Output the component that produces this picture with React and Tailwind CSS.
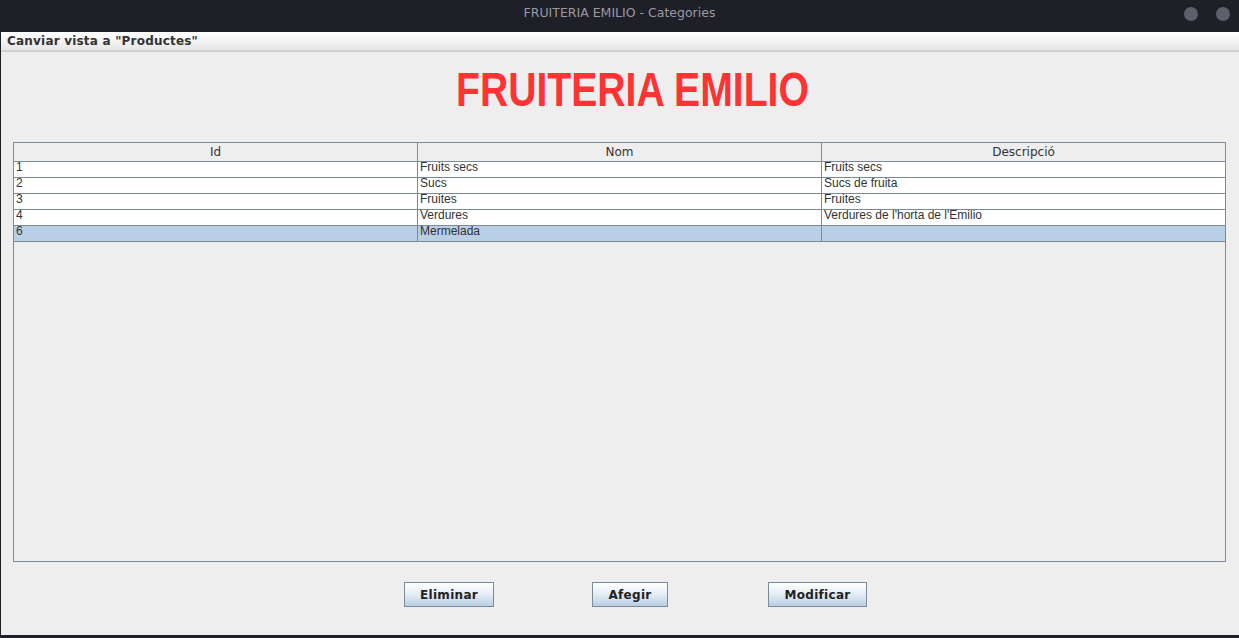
import React from "react";

const rows = [
    { id: "1", nom: "Fruits secs", desc: "Fruits secs" },
    { id: "2", nom: "Sucs", desc: "Sucs de fruita" },
    { id: "3", nom: "Fruites", desc: "Fruites" },
    { id: "4", nom: "Verdures", desc: "Verdures de l'horta de l'Emilio" },
    { id: "6", nom: "Mermelada", desc: "", selected: true },
];

const Button = ({ label, className }) => (
    <button
        className={`${className} h-[25px] shrink-0 border border-[#7a8a99] bg-gradient-to-b from-[#ffffff] via-[#e3ecf5] to-[#b9cfe4] text-[12px] font-bold text-[#222] font-['DejaVu_Sans',sans-serif] tracking-[0.3px]`}
    >
        {label}
    </button>
);

const Cell = ({ children, last }) => (
    <div className={`flex-1 h-[16px] overflow-hidden border-b border-[#7a8a99] ${last ? "" : "border-r"} pl-[2px]`}>
        <div className="text-[12px] leading-[13px] -mt-[1px] text-[#333] font-['Liberation_Sans',Arial,sans-serif]">
            {children}
        </div>
    </div>
);

export default function App() {
    return (
        <div className="w-[1239px] h-[638px] bg-[#1f1f28] flex flex-col overflow-hidden">
            {/* window title bar */}
            <div className="h-[32px] flex items-center relative shrink-0">
                <div className="flex-1 text-center text-[12.5px] text-[#9a9aa3] font-['DejaVu_Sans',sans-serif] -mt-[6px]">
                    FRUITERIA EMILIO - Categories
                </div>
                <div className="absolute right-[9px] top-[7px] flex gap-[18px]">
                    <span className="w-[14px] h-[14px] rounded-full bg-[#5f5f6b]" />
                    <span className="w-[14px] h-[14px] rounded-full bg-[#5f5f6b]" />
                </div>
            </div>

            <div className="flex-1 ml-[1px] mb-[3px] bg-[#eeeeee] flex flex-col">
                {/* menu bar */}
                <div className="h-[20px] shrink-0 bg-gradient-to-b from-[#ffffff] to-[#e6e6e6] border-b-2 border-[#d2d2d2] flex items-center pl-[6px]">
                    <span className="text-[12px] font-bold text-[#333] font-['DejaVu_Sans',sans-serif] tracking-[0.2px]">
                        Canviar vista a "Productes"
                    </span>
                </div>

                {/* heading */}
                <div className="h-[69px] flex items-center justify-center pt-[6px] pl-[24px]">
                    <h1 className="inline-block scale-x-[0.815] text-[48px] leading-none font-bold text-[#ff3333] font-['Liberation_Sans',Arial,sans-serif]">
                        FRUITERIA EMILIO
                    </h1>
                </div>

                {/* table */}
                <div className="mt-[21px] ml-[12px] mr-[13px] h-[420px] border border-[#7a8a99] flex flex-col bg-[#eeeeee]">
                    <div className="flex h-[19px] border-b border-[#7a8a99] bg-[#eeeeee]">
                        {["Id", "Nom", "Descripció"].map((h, i) => (
                            <div
                                key={h}
                                className={`flex-1 flex items-center justify-center text-[12px] text-[#333] font-['DejaVu_Sans',sans-serif] ${i < 2 ? "border-r border-[#7a8a99]" : ""}`}
                            >
                                {h}
                            </div>
                        ))}
                    </div>
                    {rows.map(r => (
                        <div key={r.id} className={`flex ${r.selected ? "bg-[#b8cfe5]" : "bg-white"}`}>
                            <Cell>{r.id}</Cell>
                            <Cell>{r.nom}</Cell>
                            <Cell last>{r.desc}</Cell>
                        </div>
                    ))}
                </div>

                {/* buttons */}
                <div className="flex items-start mt-[20px] ml-[403px]">
                    <Button label="Eliminar" className="w-[90px]" />
                    <Button label="Afegir" className="w-[76px] ml-[98px]" />
                    <Button label="Modificar" className="w-[99px] ml-[100px]" />
                </div>
            </div>
        </div>
    );
}
